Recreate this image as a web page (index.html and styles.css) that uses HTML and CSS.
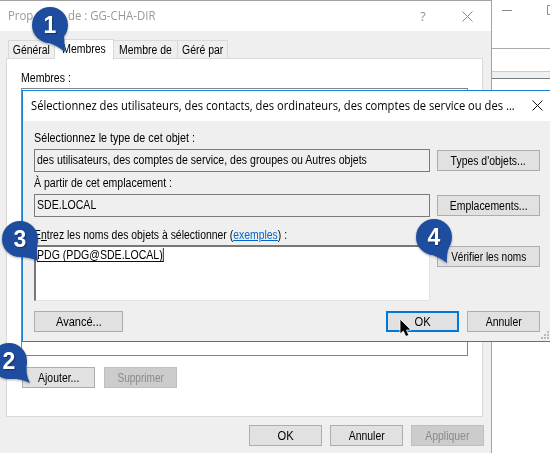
FILE: index.html
```html
<!DOCTYPE html>
<html lang="fr">
<head>
<meta charset="utf-8">
<title>GG-CHA-DIR</title>
<link rel="stylesheet" href="styles.css">
</head>
<body>
<main class="desktop">
  <section class="console">
    <div class="console-title">
      <svg width="58" height="24" viewBox="0 0 58 24" fill="none" stroke="#888"><path d="M10 10.500h10M66 5.500H55.500V14.500H66"/></svg>
    </div>
    <div class="console-menu"></div>
    <div class="console-bar"></div>
  </section>

  <section class="props">
    <header class="props-title">
      <span class="caption"><span class="t">Prop</span></span>
      <span class="caption-name"><span class="t">de : GG-CHA-DIR</span></span>
      <span class="help">?</span>
      <svg class="close" width="11" height="11" viewBox="0 0 11 11" stroke="#888" fill="none"><path d="M.5.5l10 10M10.500.5l-10 10"/></svg>
    </header>
    <nav class="tabs">
      <span class="tab general"><span class="t">Général</span></span>
      <span class="tab active"><span class="t">Membres</span></span>
      <span class="tab member-of"><span class="t">Membre de</span></span>
      <span class="tab managed"><span class="t">Géré par</span></span>
    </nav>
    <div class="panel">
      <div class="list-label"><span class="t">Membres :</span></div>
      <div class="list"></div>
      <div class="row">
        <button class="btn"><span class="t">Ajouter...</span></button>
        <button class="btn off b-remove"><span class="t">Supprimer</span></button>
      </div>
    </div>
    <footer class="props-actions">
      <button class="btn b-ok"><span class="t">OK</span></button>
      <button class="btn"><span class="t">Annuler</span></button>
      <button class="btn off"><span class="t">Appliquer</span></button>
    </footer>
  </section>

  <section class="picker">
    <header class="picker-title">
      <span class="caption"><span class="t">Sélectionnez des utilisateurs, des contacts, des ordinateurs, des comptes de service ou des ...</span></span>
      <svg class="close" width="11" height="11" viewBox="0 0 11 11" stroke="#111" fill="none"><path d="M.5.5l10 10M10.500.5l-10 10"/></svg>
    </header>
    <div class="form">
      <div class="label l-type"><span class="t">Sélectionnez le type de cet objet :</span></div>
      <div class="line">
        <div class="field"><span class="t">des utilisateurs, des comptes de service, des groupes ou Autres objets</span></div>
        <button class="btn wide"><span class="t">Types d'objets...</span></button>
      </div>
      <div class="label"><span class="t">À partir de cet emplacement :</span></div>
      <div class="line">
        <div class="field"><span class="t">SDE.LOCAL</span></div>
        <button class="btn wide"><span class="t">Emplacements...</span></button>
      </div>
      <div class="label names"><span class="t">E<u>n</u>trez les noms des objets à sélectionner (<a>exemples</a>) :</span></div>
      <div class="line">
        <div class="names-box"><span class="t resolved">PDG (PDG@SDE.LOCAL)</span></div>
        <button class="btn wide b-check"><span class="t">Vérifier les noms</span></button>
      </div>
      <div class="picker-actions">
        <button class="btn b-adv"><span class="t">Avancé...</span></button>
        <button class="btn b-ok primary"><span class="t">OK</span></button>
        <button class="btn"><span class="t">Annuler</span></button>
      </div>
    </div>
    <svg class="grip" width="9" height="9" viewBox="0 0 9 9" fill="#bbb"><path d="M6 0h2v2H6zM3 3h2v2H3zM6 3h2v2H6zM0 6h2v2H0zM3 6h2v2H3zM6 6h2v2H6z"/></svg>
  </section>

  <svg class="pointer" width="14" height="21" viewBox="0 0 14 21"><path d="M1 1v15l3.300-3 2.500 5.500 3-1.300L7.500 12H12z" fill="#000" stroke="#fff" stroke-width=".8"/></svg>

  <div class="pin p1"><svg width="36" height="36"><circle cx="18" cy="18" r="18"/><path d="M12 35Q22 36 33 45L32 28z"/></svg><b>1</b></div>
  <div class="pin p2"><svg width="36" height="36"><circle cx="18" cy="18" r="18"/><path d="M17 36Q28 35 39 40Q34 31 36 18z"/></svg><b>2</b></div>
  <div class="pin p3"><svg width="36" height="36"><circle cx="18" cy="18" r="18"/><path d="M18 36Q27 36 36 40Q34 29 36 18z"/></svg><b>3</b></div>
  <div class="pin p4"><svg width="36" height="36"><circle cx="18" cy="18" r="18"/><path d="M11 34.500Q22 37 31 44Q30 33 35 24z"/></svg><b>4</b></div>
</main>
</body>
</html>
```
FILE: styles.css
```css
* { box-sizing: border-box; }
body { margin: 0; font: 12px/14px "Liberation Sans", Arial, sans-serif; color: #000; }
.desktop { position: relative; width: 550px; height: 453px; overflow: hidden; background: #fff; }

/* The bitmap dialog font is narrower than the text face. */
.t { display: inline-block; white-space: nowrap; transform: scaleX(.88); transform-origin: left center; }
.btn .t, .tab .t { transform: scaleX(.87); transform-origin: center; }

.console { position: absolute; left: 492px; top: 0; width: 58px; height: 453px; }
.console-title { height: 49px; border-bottom: 1px solid #aaa; }
.console-title svg { display: block; }
.console-menu { height: 22px; }
.console-bar { height: 8px; background: #efefef; border-top: 1px solid #ccc; border-bottom: 1px solid #747c84; }

.props { position: absolute; isolation: isolate; left: 0; top: 0; width: 492px; height: 453px; background: #efefef; border-top: 1px solid #a3a3a3; border-right: 1px solid #a3a3a3; }
.props-title { height: 30px; background: #fff; display: flex; align-items: center; padding-left: 8px; color: #999; font: 12px/16px "Open Sans", sans-serif; }
.props-title .t { transform: scaleX(.95); }
.caption-name { width: 352px; }
.props-title .caption { width: 60px; }
.props-title .help { width: 42px; font-size: 13px; }
.tabs { display: flex; align-items: flex-end; height: 28px; padding-left: 8px; }
.tab { height: 19px; line-height: 19px; border: 1px solid #d9d9d9; border-bottom: 0; border-left: 0; display: flex; justify-content: center; }
.general { width: 47px; border-left: 1px solid #d9d9d9; }
.tab.active { width: 59px; height: 21px; margin-bottom: -1px; padding-left: 1px; line-height: 18px; background: #fff; z-index: 1; }
.member-of { width: 64px; }
.managed { width: 50px; }
.panel { width: 477px; height: 359px; margin: -1px 0 0 6px; padding: 12px 14px 0; background: #fff; border: 1px solid #d9d9d9; }
.list-label { height: 17px; }
.list { width: 447px; height: 268px; border: 1px solid #82868c; }
.row { display: flex; gap: 9px; padding: 11px 0 0 1px; }
.props-actions { display: flex; justify-content: flex-end; gap: 8px; padding: 8px 7px 0 0; }

.btn { width: 73px; height: 21px; padding: 0; font: inherit; color: #000; text-align: center; background: #e1e1e1; border: 1px solid #adadad; border-radius: 0; white-space: nowrap; }
.btn.off { color: #8a8a8a; background: #ccc; border-color: #bfbfbf; }
.btn.primary { border: 2px solid #0078d7; }
.btn.b-ok .t { transform: scaleX(.93); }
.btn.b-adv .t { transform: scaleX(.92); }
.btn.b-remove .t, .btn.b-check .t { transform: scaleX(.84); }

.picker { position: absolute; left: 22px; top: 90px; width: 530px; height: 252px; background: #efefef; border: 1px solid #1883d7; }
.picker-title { height: 30px; background: #fff; display: flex; align-items: center; padding-left: 8px; color: #000; font: 12px/16px "Open Sans", sans-serif; }
.picker-title .caption { width: 501px; flex: none; }
.picker-title .close { margin-bottom: 2px; }
.picker-title .t { transform: scaleX(.932); }
.form { padding: 10px 0 0 11px; width: 517px; }
.label { height: 18px; white-space: nowrap; }
.label.l-type .t { transform: scaleX(.897); }
.line { display: flex; justify-content: space-between; align-items: flex-start; }
.line + .label { margin-top: 4px; }
.line + .label.names { margin-top: 11px; height: 17px; }
.label.names .t { transform: scaleX(.868); }
.field { width: 396px; height: 23px; padding: 3px 2px; border: 1px solid #7a7a7a; white-space: nowrap; }
.wide { width: 103px; margin-top: 1px; }
.names-box { width: 396px; height: 56px; padding: 1px 1px; background: #fff; border: 1px solid #e3e3e3; border-left: 2px solid #777; border-top: 2px solid #777; }
.resolved { height: 14px; border-bottom: 1px solid #111; border-right: 1px solid #111; }
.label a { color: #0066cc; text-decoration: underline; }
.picker-actions { display: flex; gap: 8px; padding-top: 10px; }
.b-adv { width: 89px; margin-right: auto; }
.grip { position: absolute; right: 1px; bottom: 1px; }
.pointer { position: absolute; left: 399px; top: 318px; }

/* Numbered callouts */
.pin { position: absolute; width: 36px; height: 36px; color: #fff; filter: drop-shadow(0 1px 1px #0005); }
.pin svg { display: block; position: absolute; left: 0; top: 0; overflow: visible; fill: #1e4da0; }
.pin b { position: absolute; left: 0; top: 5px; width: 36px; text-align: center; font: 700 23px/26px "Liberation Sans", sans-serif; text-shadow: 1px 1px 1px #0006; }
.p1 { left: 32px; top: 7px; }
.p2 { left: -9px; top: 343px; }
.p3 { left: 2px; top: 221px; }
.p4 { left: 416px; top: 219px; }
```
